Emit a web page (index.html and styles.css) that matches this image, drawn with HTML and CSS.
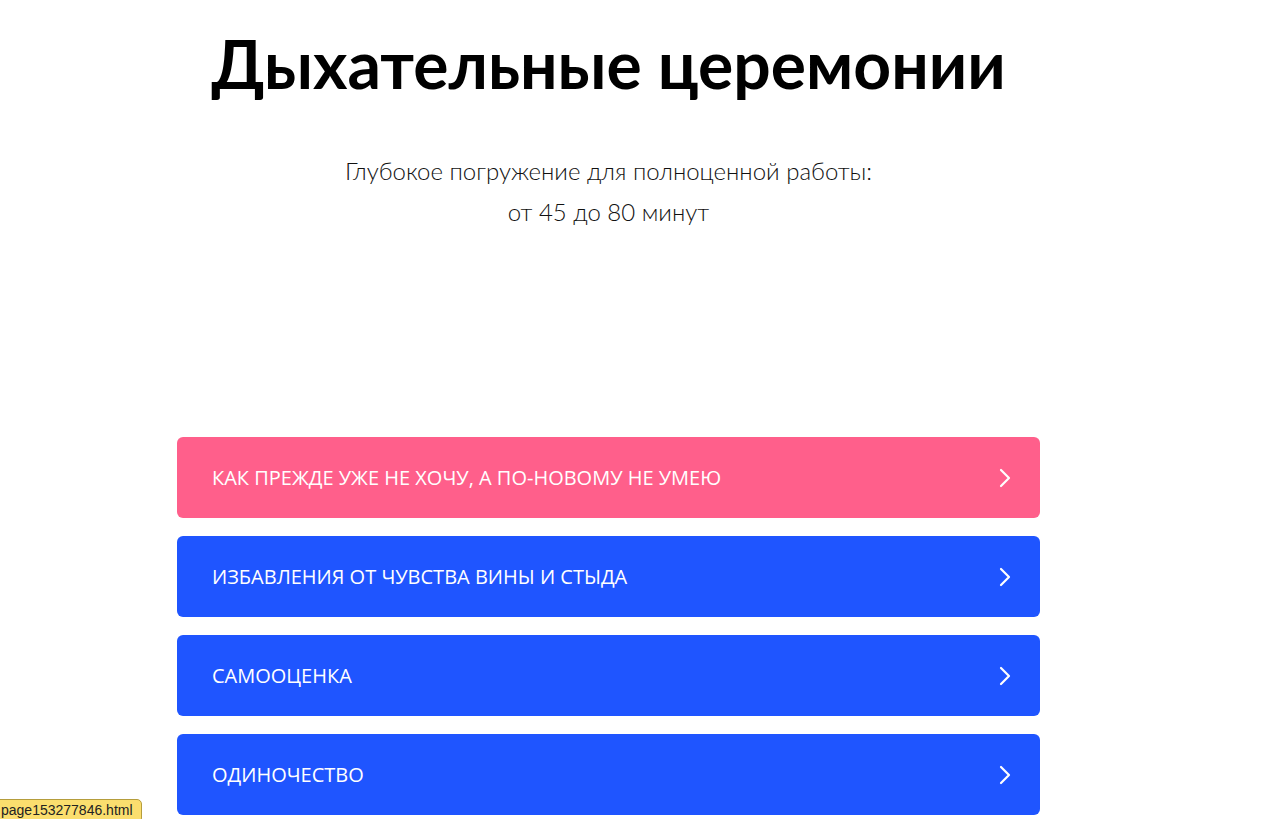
FILE: index.html
```html
<!DOCTYPE html>
<html lang="ru">
<head>
<meta charset="utf-8">
<title>Дыхательные церемонии</title>
<link rel="stylesheet" href="styles.css">
</head>
<body>
<main class="page">
  <h1 class="title">Дыхательные церемонии</h1>
  <p class="subtitle">Глубокое погружение для полноценной работы:<br>от 45 до 80 минут</p>
  <ul class="list">
    <li class="item item-pink"><span>Как прежде уже не хочу, а по-новому не умею</span><svg class="chev" viewBox="0 0 12 20" width="12" height="20"><path d="M2 2l8 8-8 8" fill="none" stroke="#fff" stroke-width="2.2" stroke-linecap="round" stroke-linejoin="round"/></svg></li>
    <li class="item"><span>Избавления от чувства вины и стыда</span><svg class="chev" viewBox="0 0 12 20" width="12" height="20"><path d="M2 2l8 8-8 8" fill="none" stroke="#fff" stroke-width="2.2" stroke-linecap="round" stroke-linejoin="round"/></svg></li>
    <li class="item"><span>Самооценка</span><svg class="chev" viewBox="0 0 12 20" width="12" height="20"><path d="M2 2l8 8-8 8" fill="none" stroke="#fff" stroke-width="2.2" stroke-linecap="round" stroke-linejoin="round"/></svg></li>
    <li class="item"><span>Одиночество</span><svg class="chev" viewBox="0 0 12 20" width="12" height="20"><path d="M2 2l8 8-8 8" fill="none" stroke="#fff" stroke-width="2.2" stroke-linecap="round" stroke-linejoin="round"/></svg></li>
  </ul>
</main>
<div class="status">page153277846.html</div>
</body>
</html>
```
FILE: styles.css
```css
html, body {
  margin: 0;
  padding: 0;
  background: #fff;
  overflow: hidden;
  height: 819px;
}
body {
  font-family: "Lato", "Open Sans", sans-serif;
  color: #000;
}
.page {
  width: 863px;
  margin-left: 177px;
  display: flex;
  flex-direction: column;
  align-items: center;
}
.title {
  margin: 22px 0 0;
  font-family: "Lato", "Open Sans", sans-serif;
  font-weight: 700;
  font-size: 66px;
  line-height: 84px;
  white-space: nowrap;
  letter-spacing: 0;
}
.subtitle {
  margin: 44px 0 0;
  text-align: center;
  font-family: "Lato", sans-serif;
  font-weight: 300;
  font-size: 24px;
  line-height: 41px;
  color: #111;
}
.list {
  list-style: none;
  margin: 205px 0 0;
  padding: 0;
  width: 100%;
  display: flex;
  flex-direction: column;
  gap: 18px;
}
.item {
  height: 81px;
  flex: none;
  border-radius: 6px;
  background: #1f55ff;
  color: #fff;
  display: flex;
  align-items: center;
  justify-content: space-between;
  padding: 0 29px 0 35px;
  box-sizing: border-box;
  text-transform: uppercase;
  font-family: "Open Sans", sans-serif;
  font-size: 20px;
  letter-spacing: 0;
}
.item-pink {
  background: #ff5f8b;
}
.chev {
  display: block;
}
.status {
  position: fixed;
  left: -6px;
  bottom: -4px;
  padding: 2px 8px 4px 6px;
  background: #fbde6e;
  border: 1px solid #b59d3c;
  border-radius: 5px;
  font-family: "Liberation Sans", sans-serif;
  font-size: 14px;
  color: #222;
}
```
